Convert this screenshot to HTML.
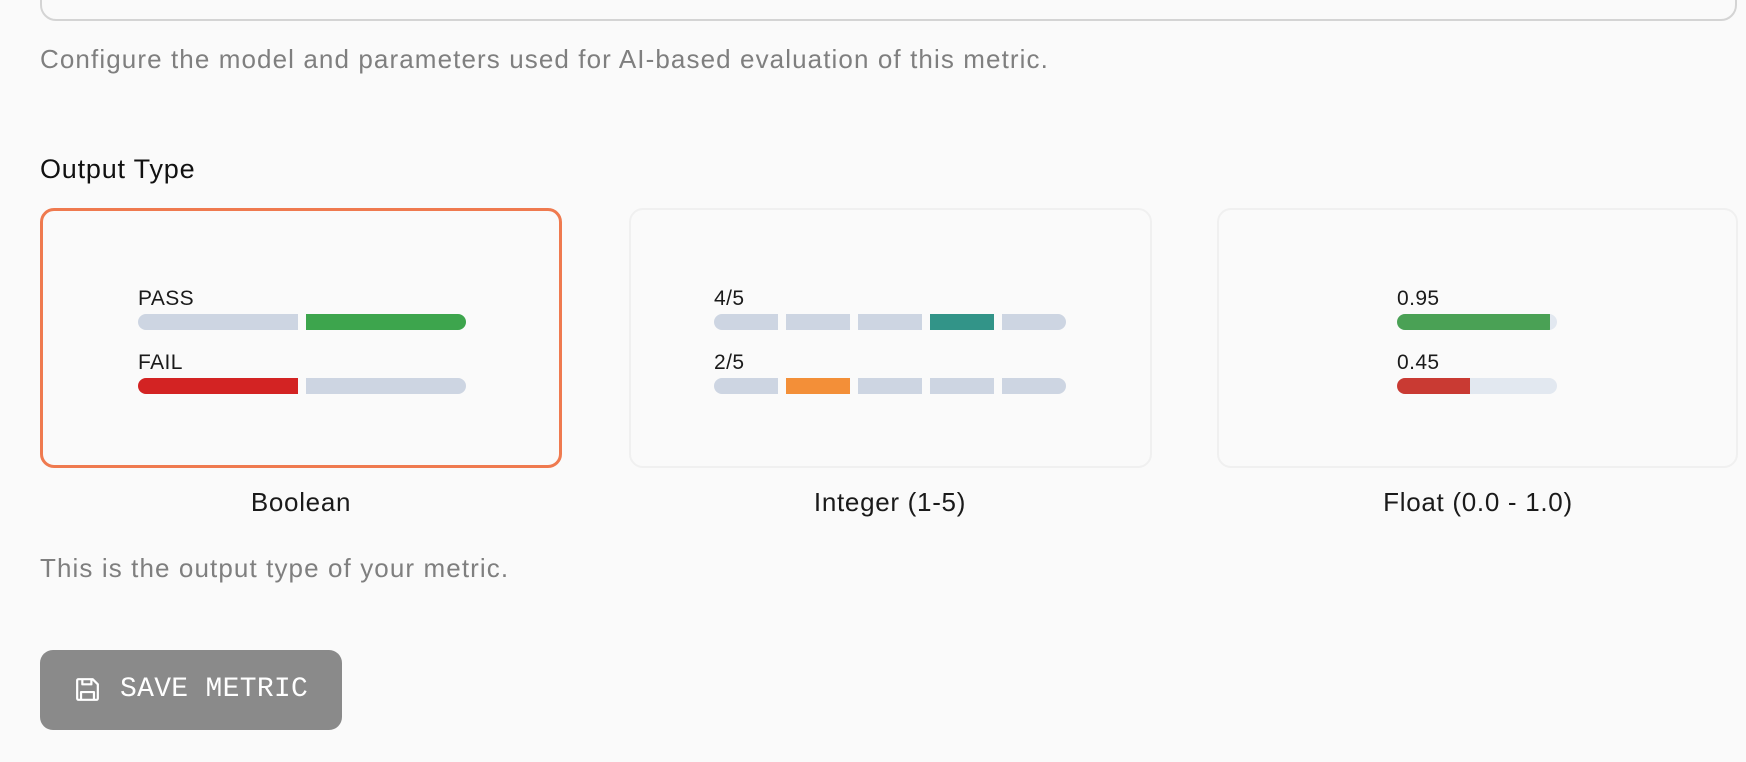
<!DOCTYPE html>
<html><head><meta charset="utf-8"><style>
*{margin:0;padding:0;box-sizing:border-box}
body{width:1746px;height:762px;background:#fafafa;font-family:"Liberation Sans",sans-serif;position:relative;overflow:hidden}
.a{position:absolute}
.t{line-height:30px;height:30px;white-space:nowrap}
.input{left:40px;top:-20px;width:1697px;height:41px;border:2px solid #d4d4d4;border-radius:16px}
.muted{color:#7f7f7f;font-size:26px;letter-spacing:1.1px}
.card{top:208px;width:522px;height:260px;border:2px solid #f0f0f0;border-radius:14px}
.sel{border:3px solid #ef7a4f}
.lbl{font-size:21px;color:#1a1a1a;letter-spacing:0.4px}
.bar{height:16px;background:#cdd5e2}
.cap{font-size:26px;color:#1a1a1a;top:487px;text-align:center;width:522px;letter-spacing:0.7px}
</style></head><body>
<div class="a input"></div>
<div class="a t muted" style="left:40px;top:44px">Configure the model and parameters used for AI-based evaluation of this metric.</div>
<div class="a t" style="left:40px;top:154px;font-size:27px;color:#111;letter-spacing:0.8px">Output Type</div>

<div class="a card sel" style="left:40px"></div>
<div class="a t lbl" style="left:138px;top:284px">PASS</div>
<div class="a bar" style="left:138px;top:314px;width:160px;border-radius:8px 0 0 8px"></div>
<div class="a bar" style="left:306px;top:314px;width:160px;border-radius:0 8px 8px 0;background:#3da54d"></div>
<div class="a t lbl" style="left:138px;top:348px">FAIL</div>
<div class="a bar" style="left:138px;top:378px;width:160px;border-radius:8px 0 0 8px;background:#d32323"></div>
<div class="a bar" style="left:306px;top:378px;width:160px;border-radius:0 8px 8px 0"></div>

<div class="a card" style="left:629px;width:523px"></div>
<div class="a t lbl" style="left:714px;top:284px">4/5</div>
<div class="a bar" style="left:714px;top:314px;width:64px;border-radius:8px 0 0 8px"></div>
<div class="a bar" style="left:786px;top:314px;width:64px"></div>
<div class="a bar" style="left:858px;top:314px;width:64px"></div>
<div class="a bar" style="left:930px;top:314px;width:64px;background:#329488"></div>
<div class="a bar" style="left:1002px;top:314px;width:64px;border-radius:0 8px 8px 0"></div>
<div class="a t lbl" style="left:714px;top:348px">2/5</div>
<div class="a bar" style="left:714px;top:378px;width:64px;border-radius:8px 0 0 8px"></div>
<div class="a bar" style="left:786px;top:378px;width:64px;background:#f38f38"></div>
<div class="a bar" style="left:858px;top:378px;width:64px"></div>
<div class="a bar" style="left:930px;top:378px;width:64px"></div>
<div class="a bar" style="left:1002px;top:378px;width:64px;border-radius:0 8px 8px 0"></div>

<div class="a card" style="left:1217px;width:521px"></div>
<div class="a t lbl" style="left:1397px;top:284px">0.95</div>
<div class="a bar" style="left:1397px;top:314px;width:160px;border-radius:8px;background:#e2e8f0;overflow:hidden"><div style="width:153px;height:16px;background:#4aa155"></div></div>
<div class="a t lbl" style="left:1397px;top:348px">0.45</div>
<div class="a bar" style="left:1397px;top:378px;width:160px;border-radius:8px;background:#e2e8f0;overflow:hidden"><div style="width:73px;height:16px;background:#c93a33"></div></div>

<div class="a t cap" style="left:40px">Boolean</div>
<div class="a t cap" style="left:629px">Integer (1-5)</div>
<div class="a t cap" style="left:1217px">Float (0.0 - 1.0)</div>

<div class="a t muted" style="left:40px;top:553px">This is the output type of your metric.</div>

<div class="a" style="left:40px;top:650px;width:302px;height:80px;background:#8a8a8a;border-radius:13px"></div>
<svg class="a" style="left:72px;top:674px" width="31" height="31" viewBox="0 0 24 24" fill="none" stroke="#fff" stroke-width="1.7" stroke-linejoin="round"><path d="M4 5a1 1 0 0 1 1-1h11l4 4v11a1 1 0 0 1-1 1H5a1 1 0 0 1-1-1z"/><path d="M8 4v4h7V4"/><path d="M7 20v-6h10v6"/></svg>
<div class="a t" style="left:120px;top:675px;font-family:'Liberation Mono',monospace;font-size:28px;color:#fff;letter-spacing:0.3px">SAVE METRIC</div>
</body></html>
